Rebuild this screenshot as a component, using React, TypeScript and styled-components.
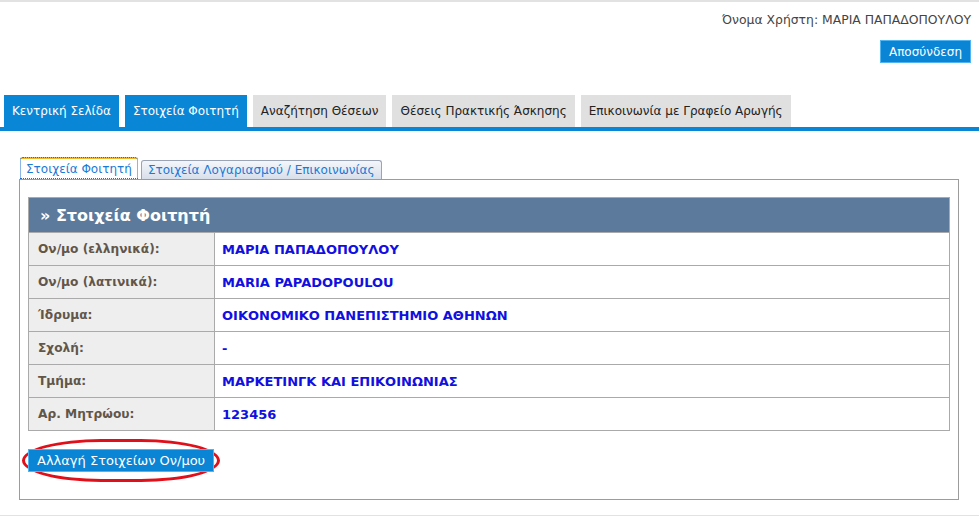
import styled, { createGlobalStyle } from 'styled-components'

const GlobalStyle = createGlobalStyle`
  html, body {
    margin: 0;
    padding: 0;
    background: #ffffff;
  }
  body {
    font-family: "DejaVu Sans", Verdana, sans-serif;
    font-size: 12px;
  }
`

const navItems = [
  { label: 'Κεντρική Σελίδα', active: true },
  { label: 'Στοιχεία Φοιτητή', active: true },
  { label: 'Αναζήτηση Θέσεων', active: false },
  { label: 'Θέσεις Πρακτικής Άσκησης', active: false },
  { label: 'Επικοινωνία με Γραφείο Αρωγής', active: false },
]

const rows = [
  { label: 'Ον/μο (ελληνικά):', value: 'ΜΑΡΙΑ ΠΑΠΑΔΟΠΟΥΛΟΥ' },
  { label: 'Ον/μο (λατινικά):', value: 'MARIA PAPADOPOULOU' },
  { label: 'Ίδρυμα:', value: 'ΟΙΚΟΝΟΜΙΚΟ ΠΑΝΕΠΙΣΤΗΜΙΟ ΑΘΗΝΩΝ' },
  { label: 'Σχολή:', value: '-' },
  { label: 'Τμήμα:', value: 'ΜΑΡΚΕΤΙΝΓΚ ΚΑΙ ΕΠΙΚΟΙΝΩΝΙΑΣ' },
  { label: 'Αρ. Μητρώου:', value: '123456' },
]

function App() {
  return (
    <Page>
      <GlobalStyle />
      <Header>
        <UserLine>Όνομα Χρήστη: ΜΑΡΙΑ ΠΑΠΑΔΟΠΟΥΛΟΥ</UserLine>
        <BlueButton>Αποσύνδεση</BlueButton>
      </Header>

      <NavBar>
        {navItems.map((item) => (
          <NavTab key={item.label} $active={item.active}>
            {item.label}
          </NavTab>
        ))}
      </NavBar>

      <Content>
        <SubTabs>
          <SubTab $active>Στοιχεία Φοιτητή</SubTab>
          <SubTab>Στοιχεία Λογαριασμού / Επικοινωνίας</SubTab>
        </SubTabs>
        <Panel>
          <Table>
            <thead>
              <tr>
                <HeadCell colSpan={2}>» Στοιχεία Φοιτητή</HeadCell>
              </tr>
            </thead>
            <tbody>
              {rows.map((row) => (
                <tr key={row.label}>
                  <LabelCell>{row.label}</LabelCell>
                  <ValueCell>{row.value}</ValueCell>
                </tr>
              ))}
            </tbody>
          </Table>
          <Ring>
            <ActionButton>Αλλαγή Στοιχείων Ον/μου</ActionButton>
          </Ring>
        </Panel>
      </Content>
      <BottomRule />
    </Page>
  )
}

export default App

const Page = styled.div`
  width: 979px;
  border-top: 2px solid #e2e2e2;
  color: #333333;
`

const Header = styled.header`
  display: flex;
  flex-direction: column;
  align-items: flex-end;
  padding: 10px 8px 0 0;
`

const UserLine = styled.div`
  font-size: 12.4px;
  line-height: 16px;
  color: #444444;
`

const BlueButton = styled.button`
  margin-top: 12px;
  height: 23px;
  padding: 0 8px;
  border: 1px solid #4fb4f0;
  background: #0a84d4;
  color: #ffffff;
  font-family: "DejaVu Sans", Verdana, sans-serif;
  font-size: 12px;
  cursor: pointer;
`

const NavBar = styled.nav`
  display: flex;
  gap: 6px;
  margin-top: 32px;
  padding-left: 4px;
  border-bottom: 4px solid #0a86d6;
`

const NavTab = styled.div<{ $active?: boolean }>`
  height: 32px;
  display: flex;
  align-items: center;
  padding: 0 8px;
  font-size: 12px;
  background: ${(p) => (p.$active ? '#0a86d6' : '#e0e0e0')};
  color: ${(p) => (p.$active ? '#ffffff' : '#222222')};
`

const Content = styled.div`
  padding: 26px 20px 0 19px;
`

const SubTabs = styled.div`
  display: flex;
  align-items: flex-end;
  gap: 3px;
  padding-left: 1px;
  height: 22px;
`

const SubTab = styled.div<{ $active?: boolean }>`
  height: ${(p) => (p.$active ? '20px' : '18px')};
  display: flex;
  align-items: center;
  padding: 0 6px;
  font-size: 12px;
  color: #1a7ad6;
  border-radius: 3px 3px 0 0;
  ${(p) =>
    p.$active
      ? `
    background: #ffffff;
    border-top: 2px solid #f5b622;
    outline: 1px dotted #1a6fd0;
    outline-offset: -1px;
  `
      : `
    background: linear-gradient(#f4f6fa, #d9dfea);
    border: 1px solid #9aa4b4;
    border-bottom: none;
  `}
`

const Panel = styled.div`
  border: 1px solid #9c9c9c;
  padding: 17px 8px 17px 8px;
`

const Table = styled.table`
  width: 100%;
  border-collapse: collapse;
  border: 1px solid #aaaaaa;
`

const HeadCell = styled.th`
  height: 34px;
  padding: 0 0 0 11px;
  background: #5c7b9c;
  color: #ffffff;
  font-size: 16px;
  font-weight: bold;
  text-align: left;
  border: 1px solid #aaaaaa;
`

const LabelCell = styled.td`
  width: 176px;
  height: 32px;
  padding: 0 0 0 9px;
  background: #eeeeee;
  color: #62564a;
  font-size: 12.2px;
  font-weight: bold;
  border: 1px solid #aaaaaa;
`

const ValueCell = styled.td`
  padding: 0 0 0 7px;
  color: #1010e0;
  font-size: 13px;
  font-weight: bold;
  border: 1px solid #aaaaaa;
`

const Ring = styled.div`
  display: inline-block;
  margin: 8px 0 0 -6px;
  padding: 7px 3px;
  border: 3px solid #e0101b;
  border-radius: 40% / 50%;
`

const ActionButton = styled.button`
  display: block;
  height: 23px;
  padding: 0 8px;
  border: 1px solid #4fb4f0;
  background: #0a84d4;
  color: #ffffff;
  font-family: "DejaVu Sans", Verdana, sans-serif;
  font-size: 13px;
  cursor: pointer;
`

const BottomRule = styled.div`
  margin-top: 15px;
  border-top: 2px solid #e2e2e2;
`
